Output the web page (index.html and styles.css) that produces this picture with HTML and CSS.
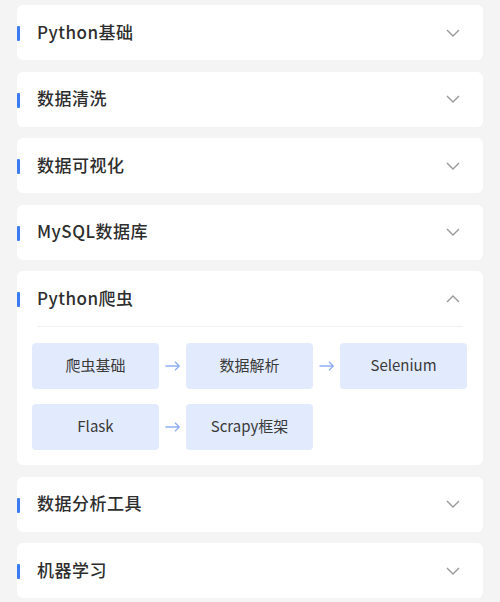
FILE: index.html
```html
<!DOCTYPE html>
<html lang="zh">
<head>
<meta charset="utf-8">
<link rel="stylesheet" href="styles.css">
</head>
<body>
<div class="list">
  <div class="card">
    <div class="head"><span class="title">Python基础</span><svg class="chev" viewBox="0 0 14 8"><path d="M1 1l6 6 6-6"/></svg></div>
  </div>
  <div class="card">
    <div class="head"><span class="title">数据清洗</span><svg class="chev" viewBox="0 0 14 8"><path d="M1 1l6 6 6-6"/></svg></div>
  </div>
  <div class="card">
    <div class="head"><span class="title">数据可视化</span><svg class="chev" viewBox="0 0 14 8"><path d="M1 1l6 6 6-6"/></svg></div>
  </div>
  <div class="card">
    <div class="head"><span class="title">MySQL数据库</span><svg class="chev" viewBox="0 0 14 8"><path d="M1 1l6 6 6-6"/></svg></div>
  </div>
  <div class="card open">
    <div class="head"><span class="title">Python爬虫</span><svg class="chev" viewBox="0 0 14 8"><path d="M1 7l6-6 6 6"/></svg></div>
    <div class="divider"></div>
    <div class="flow">
      <div class="chip">爬虫基础</div>
      <div class="arrow"><svg viewBox="0 0 16 10"><path d="M0.5 5h14M10 0.8l4.3 4.2-4.3 4.2"/></svg></div>
      <div class="chip">数据解析</div>
      <div class="arrow"><svg viewBox="0 0 16 10"><path d="M0.5 5h14M10 0.8l4.3 4.2-4.3 4.2"/></svg></div>
      <div class="chip">Selenium</div>
      <div class="chip">Flask</div>
      <div class="arrow"><svg viewBox="0 0 16 10"><path d="M0.5 5h14M10 0.8l4.3 4.2-4.3 4.2"/></svg></div>
      <div class="chip">Scrapy框架</div>
    </div>
  </div>
  <div class="card">
    <div class="head"><span class="title">数据分析工具</span><svg class="chev" viewBox="0 0 14 8"><path d="M1 1l6 6 6-6"/></svg></div>
  </div>
  <div class="card">
    <div class="head"><span class="title">机器学习</span><svg class="chev" viewBox="0 0 14 8"><path d="M1 1l6 6 6-6"/></svg></div>
  </div>
</div>
</body>
</html>
```

FILE: styles.css
```css
html, body {
  margin: 0;
  padding: 0;
  background: #f4f4f4;
}
body {
  font-family: "Noto Sans CJK SC", "Noto Sans", sans-serif;
  color: #333;
}
.list {
  padding: 5px 17px 0 17px;
  display: flex;
  flex-direction: column;
  gap: 11.5px;
}
.card {
  background: #fff;
  border-radius: 6px;
}
.head {
  position: relative;
  height: 55px;
  display: flex;
  align-items: center;
  justify-content: space-between;
  padding: 0 23px 0 20px;
}
.head::before {
  content: "";
  position: absolute;
  left: 0;
  top: 21px;
  width: 3px;
  height: 15px;
  background: #3a7bef;
  border-radius: 1px;
}
.title {
  font-size: 17px;
  line-height: 1;
  font-weight: 500;
  letter-spacing: 0.5px;
  color: #2e2e2e;
  padding-bottom: 3px;
}
.chev {
  width: 14px;
  height: 8px;
  fill: none;
  stroke: #999;
  stroke-width: 1.4;
}
.divider {
  height: 1px;
  background: #f1f1f1;
  margin: 0 20px;
}
.flow {
  display: grid;
  grid-template-columns: 127px 27px 127px 27px 127px;
  row-gap: 15px;
  padding: 16px 16px 15px 15px;
}
.chip {
  height: 46px;
  box-sizing: border-box;
  padding-bottom: 3px;
  background: #e2eafd;
  border-radius: 4px;
  display: flex;
  align-items: center;
  justify-content: center;
  font-size: 15px;
  line-height: 1;
  color: #3a3a3a;
}
.flow .chip:nth-of-type(4) {
  grid-column: 1;
}
.arrow {
  display: flex;
  align-items: center;
  justify-content: center;
}
.arrow svg {
  width: 16px;
  height: 10px;
  fill: none;
  stroke: #8eaef4;
  stroke-width: 1.3;
}
```
